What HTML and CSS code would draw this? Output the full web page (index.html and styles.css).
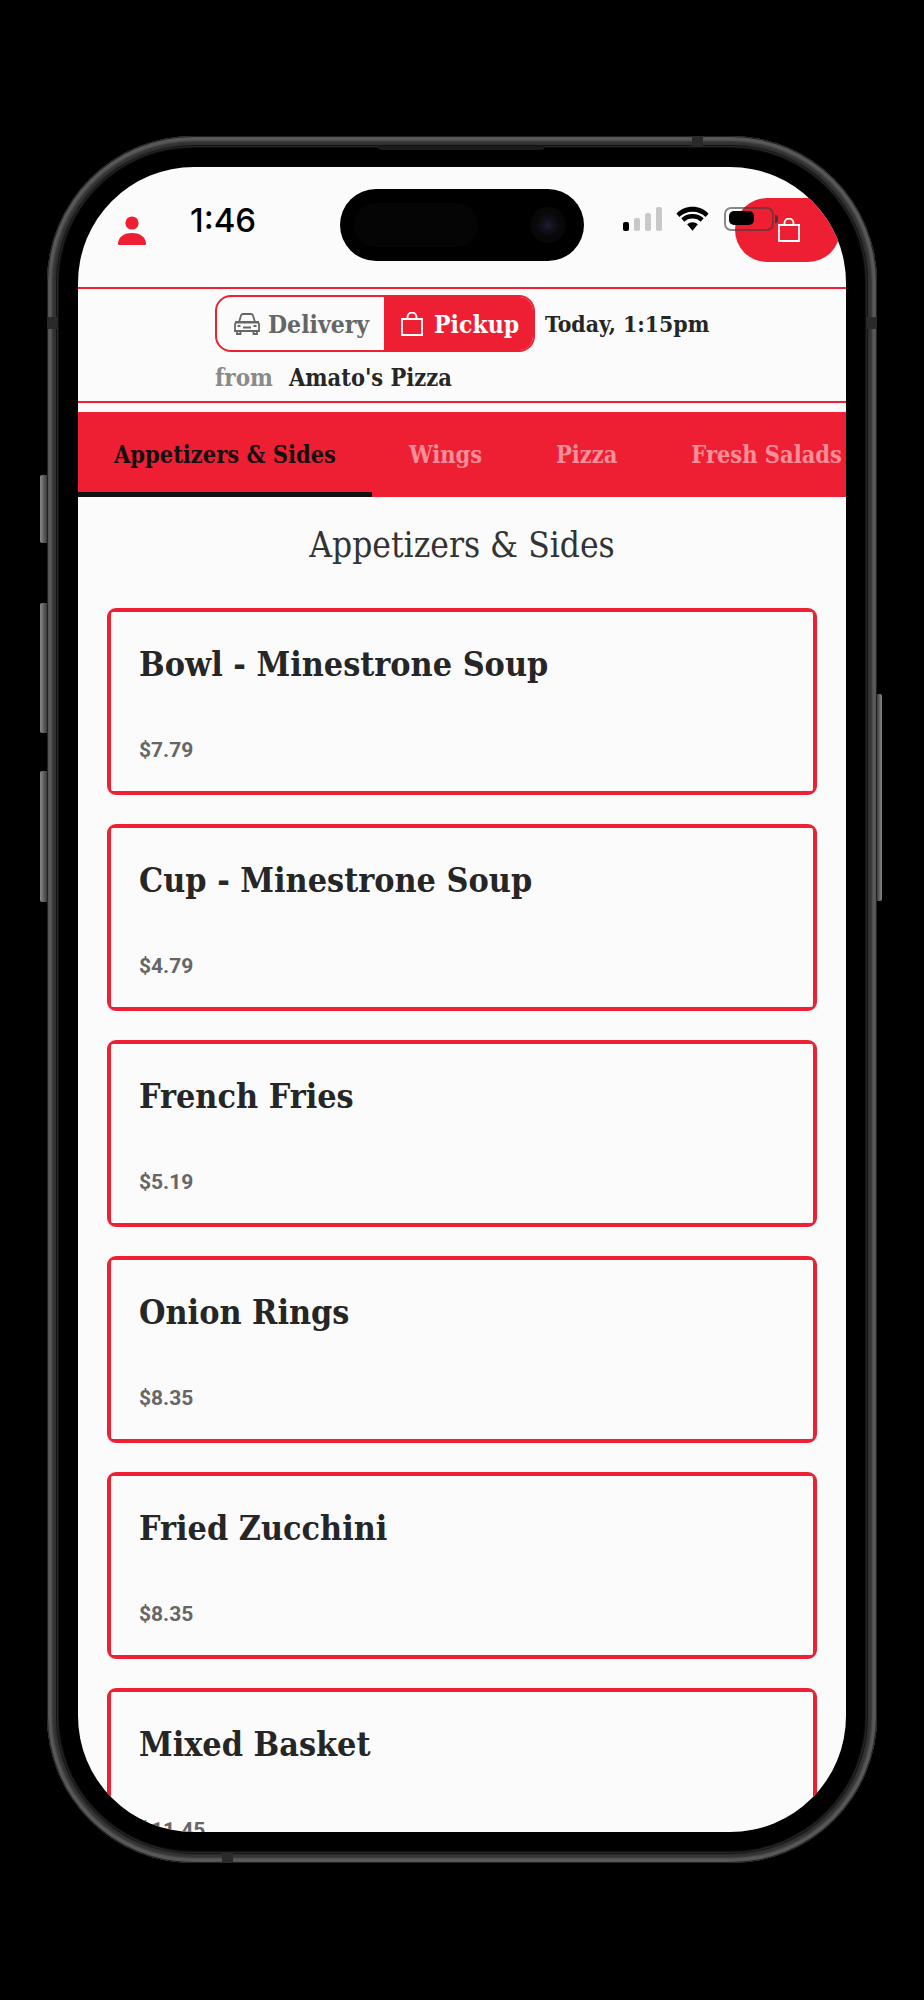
FILE: index.html
```html
<!DOCTYPE html>
<html lang="en">
<head>
<meta charset="utf-8">
<title>Amato's Pizza</title>
<link rel="stylesheet" href="styles.css">
</head>
<body>
<div class="stage">
  <div class="device">
    <span class="btn btn-action"></span>
    <span class="btn btn-up"></span>
    <span class="btn btn-down"></span>
    <span class="btn btn-power"></span>
    <span class="band band-top"></span>
    <span class="band band-left"></span>
    <span class="band band-right"></span>
    <span class="band band-bottom"></span>
    <span class="speaker"></span>
    <div class="screen">
      <header class="top-bar">
        <svg class="user-icon" viewBox="0 0 28 30"><circle cx="14" cy="7" r="6.6"/><path d="M1 29c-1 0-1-1-1-2C1 20 7 17 14 17s13 3 14 10c0 1 0 2-1 2z"/></svg>
        <button class="cart-btn">
          <svg class="bag" viewBox="0 0 22 24"><path d="M1 7h20v16H1z M6.500 7V5a4.500 4.500 0 0 1 9 0v2"/></svg>
        </button>
      </header>
      <section class="order-info">
        <div class="order-row">
          <div class="segment">
            <div class="seg seg-off">
              <svg class="car" viewBox="0 0 26 22"><path d="M5 9 7 2.500C7.300 1.500 8 1 9 1h8c1 0 1.700.5 2 1.500L21 9M2 9.500 1 11v7h24v-7l-1-1.500zM1 9h24M3 18v3h3.500v-3M19.500 18v3H23v-3M9 14.500h8M3.500 13h3M19.500 13h3"/></svg>
              <span>Delivery</span>
            </div>
            <div class="seg seg-on">
              <svg class="bag" viewBox="0 0 22 24"><path d="M1 7h20v16H1z M6.500 7V5a4.500 4.500 0 0 1 9 0v2"/></svg>
              <span>Pickup</span>
            </div>
          </div>
          <span class="when">Today, 1:15pm</span>
        </div>
        <div class="from-row">
          <span class="from">from</span>
          <span class="store">Amato's Pizza</span>
        </div>
      </section>
      <nav class="tabs">
        <a class="tab tab-active">Appetizers &amp; Sides</a>
        <a class="tab">Wings</a>
        <a class="tab">Pizza</a>
        <a class="tab">Fresh Salads</a>
      </nav>
      <h1 class="section-title">Appetizers &amp; Sides</h1>
      <div class="menu">
        <article class="card"><div class="card-in"><h2>Bowl - Minestrone Soup</h2><p>$7.79</p></div></article>
        <article class="card"><div class="card-in"><h2>Cup - Minestrone Soup</h2><p>$4.79</p></div></article>
        <article class="card"><div class="card-in"><h2>French Fries</h2><p>$5.19</p></div></article>
        <article class="card"><div class="card-in"><h2>Onion Rings</h2><p>$8.35</p></div></article>
        <article class="card"><div class="card-in"><h2>Fried Zucchini</h2><p>$8.35</p></div></article>
        <article class="card"><div class="card-in"><h2>Mixed Basket</h2><p>$11.45</p></div></article>
      </div>
      <div class="status">
        <span class="time">1:46</span>
        <div class="island"><span class="island-in"></span><span class="lens"></span></div>
        <div class="signal"><i class="b1"></i><i class="b2"></i><i class="b3"></i><i class="b4"></i></div>
        <svg class="wifi" viewBox="0 0 36 25"><path d="M18 25 12.500 18.500a8 8 0 0 1 11 0z"/><path d="M18 5.500c5.500 0 10 2 13.500 5.500l3-3.500C30.500 3 24.500 .5 18 .5S5.500 3 1.500 7.500l3 3.500C8 7.500 12.500 5.500 18 5.500z"/><path d="M18 12.500c3.500 0 6.500 1.300 8.500 3.300l3-3.500C26.500 9.300 22.500 7.800 18 7.800S9.500 9.300 6.500 12.300l3 3.500c2-2 5-3.300 8.500-3.300z"/></svg>
        <div class="battery"><span class="level"></span><span class="nub"></span></div>
      </div>
    </div>
  </div>
</div>
</body>
</html>
```
FILE: styles.css
```css
* { box-sizing: border-box; }
html, body { margin: 0; background: #000; }
.stage { height: 2000px; padding-top: 136px; display: flex; justify-content: center; align-items: flex-start; overflow: hidden; }

.device {
  position: relative;
  width: 830px;
  height: 1727px;
  padding: 31px;
  background: #000;
  border-radius: 146px;
  box-shadow:
    inset 0 0 1px 1px #1c1c1c,
    inset 0 0 2px 5px #5a5a5a,
    inset 0 0 1px 9px #333,
    inset 0 0 1px 10px #0c0c0c,
    inset 0 0 2px 11px #3c3c3c;
}
.btn { position: absolute; background: linear-gradient(90deg, #8a8a8a, #3a3a3a); border-radius: 2px 0 0 2px; }
.btn-action { left: -7px; top: 339px; width: 7px; height: 68px; }
.btn-up { left: -7px; top: 467px; width: 7px; height: 130px; }
.btn-down { left: -7px; top: 635px; width: 7px; height: 131px; }
.btn-power { right: -5px; top: 558px; width: 5px; height: 207px; border-radius: 0 2px 2px 0; background: linear-gradient(90deg, #3a3a3a, #8a8a8a); }
.band { position: absolute; background: #2a2a2a; }
.band-top { left: 645px; top: 0; width: 11px; height: 10px; }
.band-bottom { left: 175px; bottom: 0; width: 11px; height: 10px; }
.band-left { left: 0; top: 181px; width: 10px; height: 12px; }
.band-right { right: 0; top: 181px; width: 10px; height: 12px; }
.speaker { position: absolute; left: 331px; top: 10px; width: 167px; height: 4px; background: #1a1a1a; border-radius: 0 0 4px 4px; }

.screen {
  position: relative;
  width: 768px;
  height: 1665px;
  background: #fbfbfb;
  border-radius: 116px;
  overflow: hidden;
  font-family: "DejaVu Serif Condensed", "DejaVu Serif", serif;
  color: #262626;
}

.top-bar { position: relative; height: 122px; border-bottom: 2px solid #ee2033; }
.user-icon { position: absolute; left: 40px; top: 49px; width: 28px; height: 30px; fill: #ee1f33; }
.cart-btn { position: absolute; left: 657px; top: 31px; width: 105px; height: 64px; padding: 0 0 1px 43px; border: 0; border-radius: 32px; background: #ee1f33; display: block; text-align: left; }
.bag { width: 22px; height: 24px; fill: none; stroke: #fff; stroke-width: 1.800; display: block; }

.order-info { height: 114px; padding: 6px 0 0 137px; border-bottom: 2px solid #ee2033; }
.order-row { display: flex; align-items: center; gap: 10px; }
.segment { display: flex; width: 320px; height: 57px; border: 2px solid #ee2033; border-radius: 16px; overflow: hidden; }
.seg { display: flex; align-items: center; padding-top: 1px; font-size: 24.500px; font-weight: 700; }
.seg-off { width: 167px; padding-left: 17px; gap: 8px; color: #666; }
.seg-on { flex: 1; padding-left: 17px; gap: 11px; background: #ee1f33; color: #fff; }
.car { width: 26px; height: 22px; fill: none; stroke: #666; stroke-width: 1.800; }
.when { font-size: 22.800px; font-weight: 700; }
.from-row { display: flex; align-items: baseline; gap: 16px; margin-top: 10px; font-size: 24px; font-weight: 700; line-height: 32px; }
.from { color: #8a8a8a; }
.store { font-size: 23.400px; }

.tabs { display: flex; height: 85px; margin-top: 9px; background: #ee1f33; overflow: hidden; }
.tab { flex: none; height: 85px; padding: 0 37px; font-size: 23.400px; font-weight: 700; line-height: 87px; color: rgba(255, 255, 255, .5); white-space: nowrap; }
.tab-active { padding: 0 36px; color: #111; border-bottom: 5px solid #111; }

.section-title { margin: 0; height: 111px; font-size: 35px; font-weight: 400; line-height: 96px; text-align: center; color: #333; }

.menu { display: flex; flex-direction: column; gap: 29px; padding: 0 29px; }
.card { flex: none; height: 187px; border: 2px solid #ee2033; border-radius: 9px; }
.card-in { height: 100%; padding: 28px 28px 0; border: 2px solid #ee2033; border-radius: 4px; }
.card h2 { margin: 0; font-size: 33.800px; font-weight: 700; line-height: 48px; }
.card p { margin: 48px 0 0; font-family: Roboto, sans-serif; font-size: 21px; font-weight: 700; line-height: 28px; color: #666; }

.status { position: absolute; left: 0; top: 0; width: 100%; height: 100px; pointer-events: none; }
.time { position: absolute; left: 112px; top: 33px; font-family: Inter, sans-serif; font-size: 33px; font-weight: 500; line-height: 40px; color: #000; }
.island { position: absolute; left: 262px; top: 22px; width: 244px; height: 72px; background: #000; border-radius: 36px; }
.island-in { position: absolute; left: 14px; top: 14px; width: 124px; height: 44px; border-radius: 22px; background: #050505; }
.lens { position: absolute; left: 190px; top: 18px; width: 36px; height: 36px; border-radius: 50%; background: radial-gradient(circle, #1c1c30 0, #10101a 25%, #080808 50%, #050505 100%); }
.signal { position: absolute; left: 545px; top: 40px; height: 24px; display: flex; gap: 5px; align-items: flex-end; }
.signal i { display: block; width: 6px; border-radius: 2px; background: #c8c8c8; }
.signal .b1 { height: 9px; background: #000; }
.signal .b2 { height: 13px; }
.signal .b3 { height: 18px; }
.signal .b4 { height: 24px; }
.wifi { position: absolute; left: 597px; top: 39px; width: 35px; height: 25px; fill: #000; }
.battery { position: absolute; left: 646px; top: 40px; width: 50px; height: 24px; border: 2px solid rgba(60, 60, 60, .6); border-radius: 7px; }
.level { position: absolute; left: 3px; top: 2px; width: 25px; height: 14px; background: #000; border-radius: 5px; }
.nub { position: absolute; right: -6px; top: 6px; width: 3px; height: 8px; background: #3a3a3a; border-radius: 0 2px 2px 0; }
```
